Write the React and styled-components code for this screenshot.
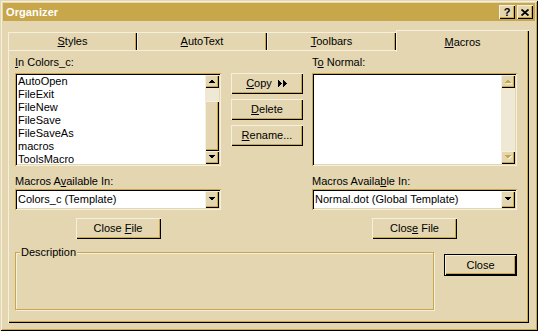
import styled, { createGlobalStyle } from "styled-components";

const face = "#e3d6b0";
const light = "#f5efde";
const gold = "#c8a64a";
const dark = "#000";
const track = "#efe8d4";

const raised = `
  box-shadow: inset 1px 1px 0 ${light}, inset -1px -1px 0 ${dark},
    inset -2px -2px 0 ${gold};
`;
const sunken = `
  box-shadow: inset 1px 1px 0 ${gold}, inset -1px -1px 0 ${light},
    inset 2px 2px 0 ${dark}, inset -2px -2px 0 ${face};
`;

const GlobalStyle = createGlobalStyle`
  html, body { margin: 0; padding: 0; background: ${face}; }
  body {
    font-family: "Liberation Sans", Arial, sans-serif;
    font-size: 11px;
    color: #000;
  }
  u { text-underline-offset: 1px; }
`;

const Window = styled.div`
  box-sizing: border-box;
  width: 538px;
  height: 331px;
  padding: 3px;
  background: ${face};
  display: flex;
  flex-direction: column;
  box-shadow: inset 1px 1px 0 ${face}, inset -1px -1px 0 ${dark},
    inset 2px 2px 0 ${light}, inset -2px -2px 0 ${gold};
`;

const TitleBar = styled.div`
  height: 18px;
  background: ${gold};
  display: flex;
  align-items: center;
  padding: 0 2px 0 3px;
  color: #fff;
  font-weight: bold;
  font-size: 11px;
`;

const TitleText = styled.div`
  flex: 1;
  letter-spacing: 0.1px;
`;

const TitleButton = styled.div`
  box-sizing: border-box;
  width: 16px;
  height: 14px;
  margin-left: 2px;
  background: ${face};
  color: ${dark};
  display: flex;
  align-items: center;
  justify-content: center;
  font-weight: bold;
  font-size: 11px;
  line-height: 1;
  ${raised}
`;

const Body = styled.div`
  padding: 9px 6px 0 5px;
`;

const TabStrip = styled.div`
  display: flex;
  align-items: flex-end;
  height: 20px;
`;

const Tab = styled.div`
  box-sizing: border-box;
  width: ${(p) => (p.$w ? `${p.$w}px` : "auto")};
  flex: ${(p) => (p.$w ? "none" : 1)};
  height: ${(p) => (p.$active ? "22px" : "18px")};
  margin-bottom: ${(p) => (p.$active ? "-2px" : "0")};
  padding-top: ${(p) => (p.$active ? "6px" : "3px")};
  position: ${(p) => (p.$active ? "relative" : "static")};
  z-index: ${(p) => (p.$active ? 1 : "auto")};
  background: ${face};
  text-align: center;
  line-height: 13px;
  box-shadow: inset 1px 0 0 ${light}, inset 0 1px 0 ${light},
    inset -1px 0 0 ${dark}, inset -2px 0 0 ${gold};
`;

const Panel = styled.div`
  box-sizing: border-box;
  height: 273px;
  padding: 6px 12px 0 7px;
  background: ${face};
  ${raised}
`;

const TopSection = styled.div`
  display: flex;
`;

const Column = styled.div`
  width: ${(p) => p.$w}px;
  margin-left: ${(p) => p.$ml || 0}px;
  display: flex;
  flex-direction: column;
`;

const MidColumn = styled.div`
  width: 72px;
  margin-left: 10px;
  padding-top: 17px;
  display: flex;
  flex-direction: column;
  gap: 5px;
`;

const Label = styled.div`
  height: 13px;
  line-height: 13px;
  margin-top: ${(p) => p.$mt || 0}px;
  margin-bottom: ${(p) => p.$mb || 0}px;
  white-space: nowrap;
`;

const ListBox = styled.div`
  box-sizing: border-box;
  height: 93px;
  padding: 2px;
  background: #fff;
  display: flex;
  ${sunken}
`;

const Items = styled.div`
  flex: 1;
  padding-left: 1px;
`;

const Item = styled.div`
  height: 13px;
  line-height: 13px;
  white-space: nowrap;
`;

const ScrollBar = styled.div`
  width: 14px;
  display: flex;
  flex-direction: column;
  background: ${track};
`;

const ArrowButton = styled.div`
  box-sizing: border-box;
  width: 14px;
  height: ${(p) => p.$h || 13}px;
  background: ${face};
  display: flex;
  align-items: center;
  justify-content: center;
  ${raised}
`;

const Track = styled.div`
  flex: 1;
  display: flex;
  flex-direction: column;
`;

const Thumb = styled.div`
  box-sizing: border-box;
  height: 50px;
  margin-top: 13px;
  background: ${face};
  ${raised}
`;

const Combo = styled.div`
  box-sizing: border-box;
  height: 21px;
  padding: 2px;
  margin-top: 1px;
  background: #fff;
  display: flex;
  align-items: stretch;
  ${sunken}
`;

const ComboText = styled.div`
  flex: 1;
  padding-left: 1px;
  line-height: 17px;
  white-space: nowrap;
`;

const ButtonRow = styled.div`
  display: flex;
  justify-content: center;
  margin-top: 8px;
`;

const Button = styled.div`
  box-sizing: border-box;
  width: ${(p) => p.$w}px;
  height: ${(p) => p.$h || 21}px;
  background: ${face};
  display: flex;
  align-items: center;
  justify-content: center;
  gap: 6px;
  line-height: 13px;
  white-space: nowrap;
  border: ${(p) => (p.$default ? `1px solid ${dark}` : "none")};
  ${raised}
`;

const BottomSection = styled.div`
  display: flex;
  align-items: flex-start;
  margin-top: 13px;
`;

const GroupBox = styled.div`
  box-sizing: border-box;
  position: relative;
  width: 419px;
  height: 58px;
  border: 1px solid ${gold};
  box-shadow: inset 1px 1px 0 ${light}, 1px 1px 0 ${light};
`;

const GroupLegend = styled.span`
  position: absolute;
  top: -7px;
  left: 4px;
  padding: 0 1px;
  line-height: 13px;
  background: ${face};
`;

const CloseWrap = styled.div`
  margin-left: 10px;
  margin-top: 2px;
`;

function Arrow({ dir = "down", disabled }) {
  const pts = dir === "up" ? "0,4 7,4 3.5,0.5" : "0,0 7,0 3.5,3.5";
  return (
    <svg width="8" height="5" viewBox="0 0 8 5" shapeRendering="crispEdges">
      {disabled && (
        <polygon points={pts} fill={light} transform="translate(1,1)" />
      )}
      <polygon points={pts} fill={disabled ? gold : dark} />
    </svg>
  );
}

function CopyArrows() {
  return (
    <svg width="10" height="7" viewBox="0 0 10 7" shapeRendering="crispEdges">
      <polygon points="0,0 4,3.5 0,7" fill={dark} />
      <polygon points="5,0 9,3.5 5,7" fill={dark} />
    </svg>
  );
}

function CloseGlyph() {
  return (
    <svg width="8" height="7" viewBox="0 0 8 7">
      <path d="M0.5 0.5 L7.5 6.5 M7.5 0.5 L0.5 6.5" stroke={dark} strokeWidth="1.8" />
    </svg>
  );
}

const macros = [
  "AutoOpen",
  "FileExit",
  "FileNew",
  "FileSave",
  "FileSaveAs",
  "macros",
  "ToolsMacro",
];

export default function App() {
  return (
    <>
      <GlobalStyle />
      <Window>
        <TitleBar>
          <TitleText>Organizer</TitleText>
          <TitleButton>?</TitleButton>
          <TitleButton>
            <CloseGlyph />
          </TitleButton>
        </TitleBar>
        <Body>
          <TabStrip>
            <Tab $w={129}>
              <u>S</u>tyles
            </Tab>
            <Tab $w={130}>
              <u>A</u>utoText
            </Tab>
            <Tab $w={129}>
              <u>T</u>oolbars
            </Tab>
            <Tab $active>
              <u>M</u>acros
            </Tab>
          </TabStrip>
          <Panel>
            <TopSection>
              <Column $w={206}>
                <Label $mb={4}>
                  <u>I</u>n Colors_c:
                </Label>
                <ListBox>
                  <Items>
                    {macros.map((m) => (
                      <Item key={m}>{m}</Item>
                    ))}
                  </Items>
                  <ScrollBar>
                    <ArrowButton>
                      <Arrow dir="up" />
                    </ArrowButton>
                    <Track>
                      <Thumb />
                    </Track>
                    <ArrowButton>
                      <Arrow />
                    </ArrowButton>
                  </ScrollBar>
                </ListBox>
                <Label $mt={9}>
                  Macros A<u>v</u>ailable In:
                </Label>
                <Combo>
                  <ComboText>Colors_c (Template)</ComboText>
                  <ArrowButton $h={17}>
                    <Arrow />
                  </ArrowButton>
                </Combo>
                <ButtonRow>
                  <Button $w={85}>
                    <span>
                      Close <u>F</u>ile
                    </span>
                  </Button>
                </ButtonRow>
              </Column>
              <MidColumn>
                <Button $w={72}>
                  <span>
                    <u>C</u>opy
                  </span>
                  <CopyArrows />
                </Button>
                <Button $w={72}>
                  <span>
                    <u>D</u>elete
                  </span>
                </Button>
                <Button $w={72}>
                  <span>
                    <u>R</u>ename...
                  </span>
                </Button>
              </MidColumn>
              <Column $w={205} $ml={9}>
                <Label $mb={4}>
                  T<u>o</u> Normal:
                </Label>
                <ListBox>
                  <Items />
                  <ScrollBar>
                    <ArrowButton>
                      <Arrow dir="up" disabled />
                    </ArrowButton>
                    <Track />
                    <ArrowButton>
                      <Arrow disabled />
                    </ArrowButton>
                  </ScrollBar>
                </ListBox>
                <Label $mt={9}>
                  Macros Availa<u>b</u>le In:
                </Label>
                <Combo>
                  <ComboText>Normal.dot (Global Template)</ComboText>
                  <ArrowButton $h={17}>
                    <Arrow />
                  </ArrowButton>
                </Combo>
                <ButtonRow>
                  <Button $w={85}>
                    <span>
                      Clos<u>e</u> File
                    </span>
                  </Button>
                </ButtonRow>
              </Column>
            </TopSection>
            <BottomSection>
              <GroupBox>
                <GroupLegend>Description</GroupLegend>
              </GroupBox>
              <CloseWrap>
                <Button $w={73} $h={22} $default>
                  Close
                </Button>
              </CloseWrap>
            </BottomSection>
          </Panel>
        </Body>
      </Window>
    </>
  );
}
